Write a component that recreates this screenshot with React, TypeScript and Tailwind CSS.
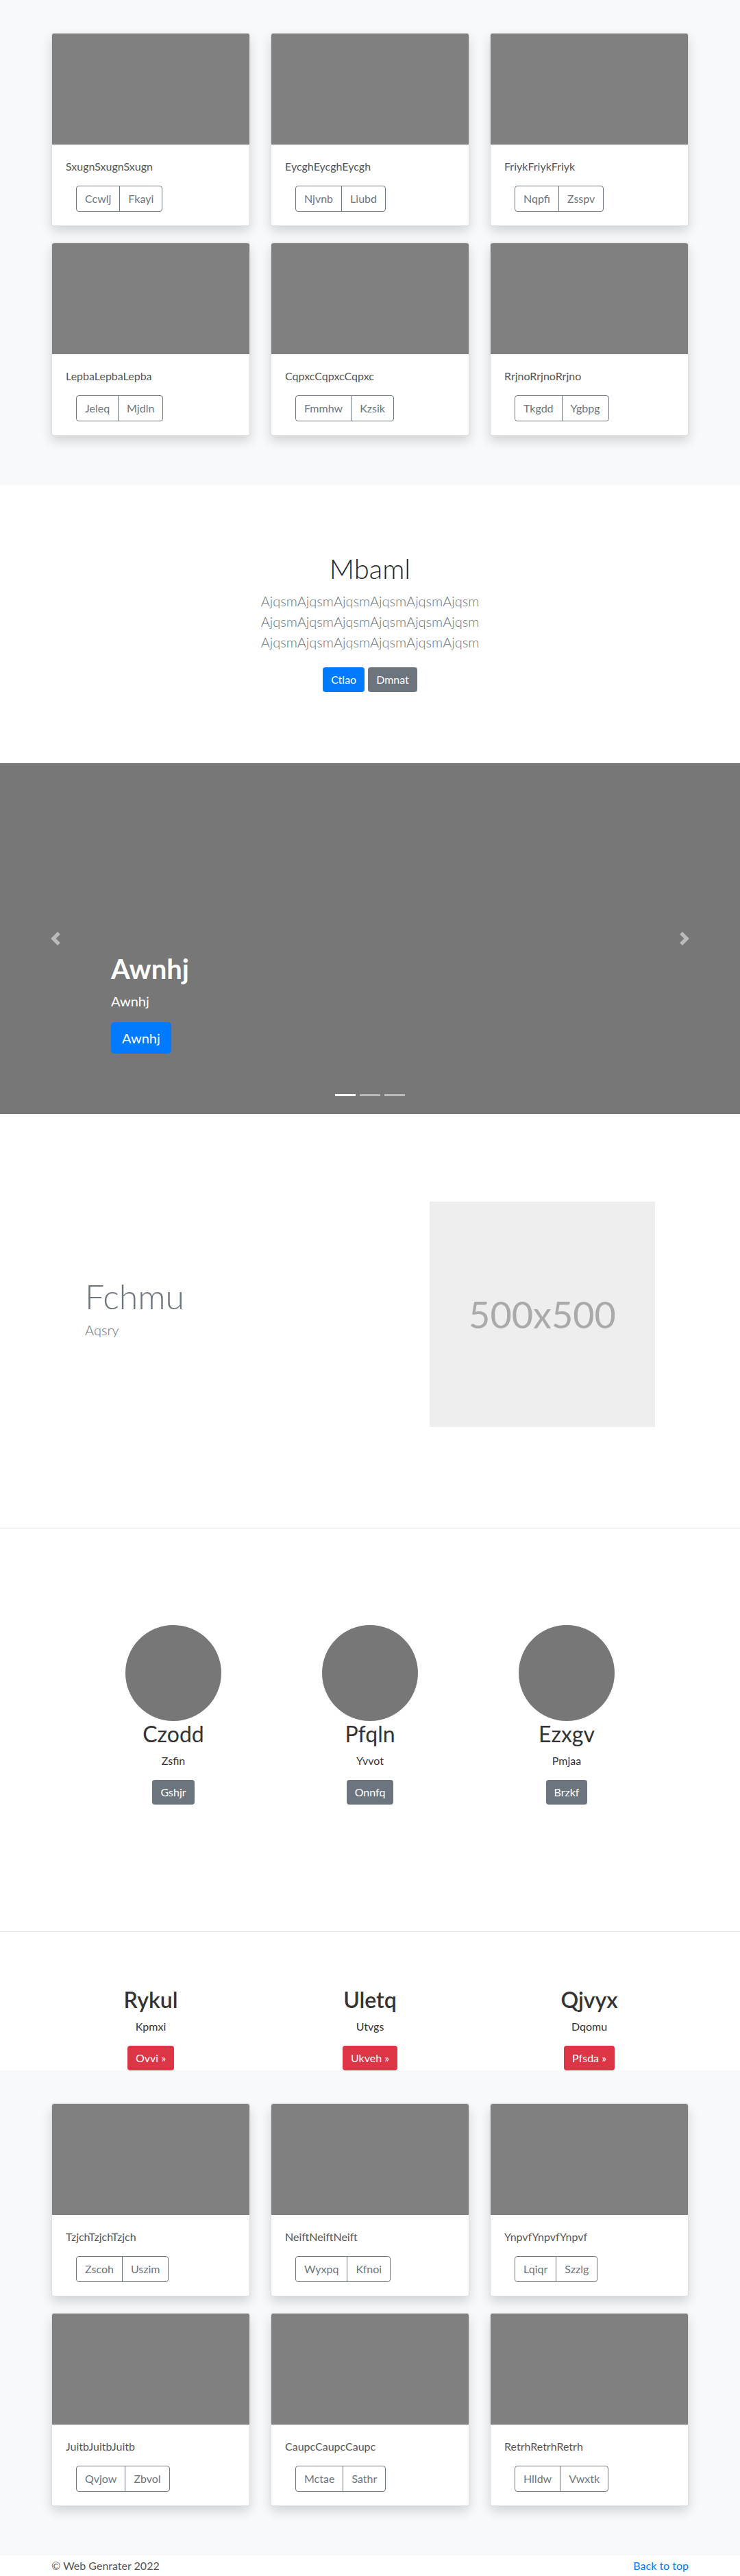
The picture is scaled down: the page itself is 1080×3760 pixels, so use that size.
import React from "react";

type CardData = { title: string; a: string; b: string };

const topCards: CardData[] = [
  { title: "SxugnSxugnSxugn", a: "Ccwlj", b: "Fkayi" },
  { title: "EycghEycghEycgh", a: "Njvnb", b: "Liubd" },
  { title: "FriykFriykFriyk", a: "Nqpfi", b: "Zsspv" },
  { title: "LepbaLepbaLepba", a: "Jeleq", b: "Mjdln" },
  { title: "CqpxcCqpxcCqpxc", a: "Fmmhw", b: "Kzsik" },
  { title: "RrjnoRrjnoRrjno", a: "Tkgdd", b: "Ygbpg" },
];

const bottomCards: CardData[] = [
  { title: "TzjchTzjchTzjch", a: "Zscoh", b: "Uszim" },
  { title: "NeiftNeiftNeift", a: "Wyxpq", b: "Kfnoi" },
  { title: "YnpvfYnpvfYnpvf", a: "Lqiqr", b: "Szzlg" },
  { title: "JuitbJuitbJuitb", a: "Qvjow", b: "Zbvol" },
  { title: "CaupcCaupcCaupc", a: "Mctae", b: "Sathr" },
  { title: "RetrhRetrhRetrh", a: "Hlldw", b: "Vwxtk" },
];

const people = [
  { name: "Czodd", sub: "Zsfin", btn: "Gshjr" },
  { name: "Pfqln", sub: "Yvvot", btn: "Onnfq" },
  { name: "Ezxgv", sub: "Pmjaa", btn: "Brzkf" },
];

const columns = [
  { name: "Rykul", sub: "Kpmxi", btn: "Ovvi »" },
  { name: "Uletq", sub: "Utvgs", btn: "Ukveh »" },
  { name: "Qjvyx", sub: "Dqomu", btn: "Pfsda »" },
];

function Card({ title, a, b }: CardData) {
  return (
    <div className="overflow-hidden rounded border border-black/[0.125] bg-white shadow-[0_8px_16px_rgba(0,0,0,0.15)]">
      <div className="h-[162px] bg-[#808080]" />
      <div className="p-5">
        <p className="text-base leading-6 text-[#555]">{title}</p>
        <div className="ml-[15px] mt-4 flex">
          <button className="rounded-l border border-[#6c757d] px-3 py-1.5 text-base leading-6 text-[#6c757d]">{a}</button>
          <button className="-ml-px rounded-r border border-[#6c757d] px-3 py-1.5 text-base leading-6 text-[#6c757d]">{b}</button>
        </div>
      </div>
    </div>
  );
}

function Album({ cards }: { cards: CardData[] }) {
  return (
    <section className="bg-[#f8f9fa] pb-[72px] pt-12">
      <div className="mx-auto w-[960px] px-[15px]">
        <div className="grid grid-cols-3 gap-x-[30px] gap-y-6">
          {cards.map((c) => (
            <Card key={c.title} {...c} />
          ))}
        </div>
      </div>
    </section>
  );
}

function Chevron({ dir }: { dir: "prev" | "next" }) {
  return (
    <svg width="20" height="20" viewBox="0 0 8 8" fill="#fff" className="opacity-50">
      {dir === "prev" ? (
        <path d="M5.25 0l-4 4 4 4 1.5-1.5L4.25 4l2.5-2.5L5.25 0z" />
      ) : (
        <path d="M2.75 0l-1.5 1.5L3.75 4l-2.5 2.5L2.75 8l4-4-4-4z" />
      )}
    </svg>
  );
}

export default function App() {
  const line = "AjqsmAjqsmAjqsmAjqsmAjqsmAjqsm";
  return (
    <div className="bg-white font-['Lato','Noto_Sans',sans-serif] text-[#212529]">
      <Album cards={topCards} />

      {/* jumbotron */}
      <section className="pb-[104px] pt-[98px] text-center">
        <h1 className="text-[40px] font-light leading-[48px] text-[#212529]">Mbaml</h1>
        <p className="mt-2 text-xl font-light leading-[30px] text-[#6c757d]">
          {line}
          <br />
          {line}
          <br />
          {line}
        </p>
        <div className="mt-[22px] flex justify-center gap-[5px]">
          <button className="rounded bg-[#007bff] px-3 py-1.5 text-base leading-6 text-white">Ctlao</button>
          <button className="rounded bg-[#6c757d] px-3 py-1.5 text-base leading-6 text-white">Dmnat</button>
        </div>
      </section>

      {/* carousel */}
      <section className="relative flex h-[512px] bg-[#777]">
        <div className="flex w-[15%] items-center justify-center">
          <Chevron dir="prev" />
        </div>
        <div className="flex flex-1 flex-col items-start justify-end pb-[88px] text-white">
          <h1 className="text-[40px] font-bold leading-[48px]">Awnhj</h1>
          <p className="mt-2 text-xl leading-[30px]">Awnhj</p>
          <button className="mt-4 rounded-[5px] bg-[#007bff] px-4 py-2 text-xl leading-[30px] text-white">Awnhj</button>
        </div>
        <div className="flex w-[15%] items-center justify-center">
          <Chevron dir="next" />
        </div>
        <div className="absolute bottom-[26px] left-0 right-0 flex justify-center gap-[6px]">
          <span className="h-[3px] w-[30px] bg-white" />
          <span className="h-[3px] w-[30px] bg-white/50" />
          <span className="h-[3px] w-[30px] bg-white/50" />
        </div>
      </section>

      {/* featurette */}
      <section className="mx-auto flex w-[960px] items-center pb-[147px] pt-[128px]">
        <div className="flex-1 pb-[14px] pl-[64px]">
          <h2 className="text-[50px] font-light leading-[50px] text-[#6c757d]">Fchmu</h2>
          <p className="mt-[9px] text-xl font-light leading-[30px] text-[#6c757d]">Aqsry</p>
        </div>
        <div className="mr-[64px] flex h-[329px] w-[329px] items-center justify-center bg-[#eee]">
          <span className="text-[54px] text-[#aaa]">500x500</span>
        </div>
      </section>

      <hr className="border-t border-black/10" />

      {/* circles */}
      <section className="pb-[185px] pt-[141px]">
        <div className="mx-auto grid w-[861px] grid-cols-3">
          {people.map((p) => (
            <div key={p.name} className="flex flex-col items-center text-center">
              <div className="h-[140px] w-[140px] rounded-full bg-[#777]" />
              <h2 className="text-[32px] leading-[38px] text-[#333]">{p.name}</h2>
              <p className="mt-2 text-base leading-6 text-[#333]">{p.sub}</p>
              <button className="mt-4 rounded bg-[#6c757d] px-3 py-1.5 text-base leading-6 text-white">{p.btn}</button>
            </div>
          ))}
        </div>
      </section>

      <hr className="border-t border-black/10" />

      {/* marketing columns */}
      <section className="pt-20">
        <div className="mx-auto grid w-[960px] grid-cols-3">
          {columns.map((c) => (
            <div key={c.name} className="flex flex-col items-center text-center">
              <h2 className="text-[32px] font-semibold leading-[38px] text-[#333]">{c.name}</h2>
              <p className="mt-2 text-base leading-6 text-[#333]">{c.sub}</p>
              <button className="mt-4 rounded bg-[#dc3545] px-3 py-1.5 text-base leading-6 text-white">{c.btn}</button>
            </div>
          ))}
        </div>
      </section>

      <Album cards={bottomCards} />

      <footer className="pb-12 pt-[3px]">
        <div className="mx-auto flex w-[960px] justify-between px-[15px] text-base leading-6">
          <p className="text-[#555]">© Web Genrater 2022</p>
          <a href="#" className="text-[#007bff]">Back to top</a>
        </div>
      </footer>
    </div>
  );
}
